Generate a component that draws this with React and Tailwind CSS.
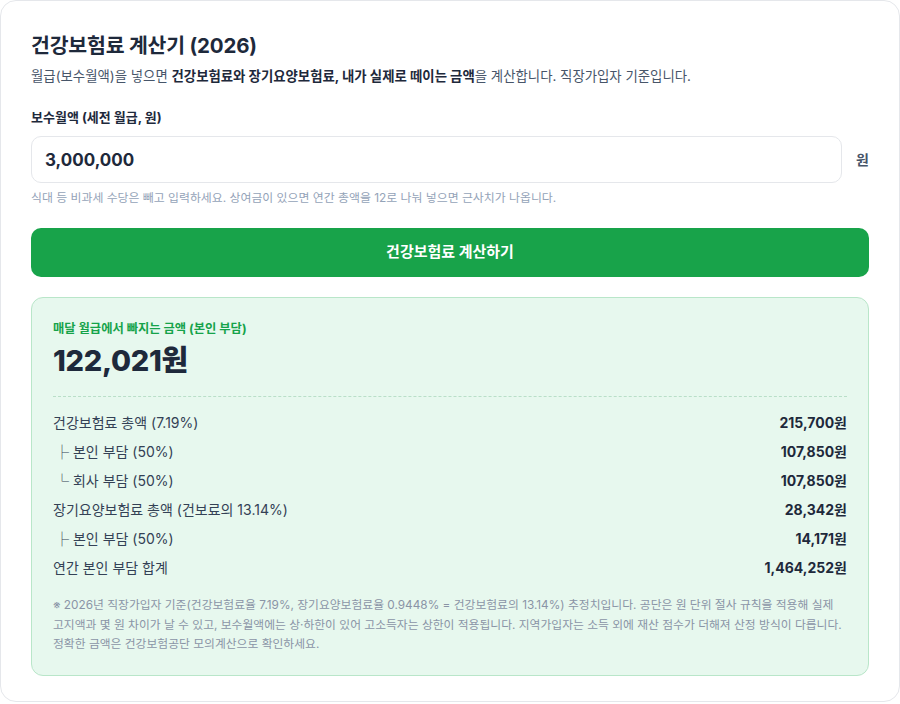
import { useState } from 'react';

const rows = [
  { label: '건강보험료 총액 (7.19%)', value: '215,700원' },
  { label: '├ 본인 부담 (50%)', value: '107,850원', sub: true },
  { label: '└ 회사 부담 (50%)', value: '107,850원', sub: true },
  { label: '장기요양보험료 총액 (건보료의 13.14%)', value: '28,342원' },
  { label: '├ 본인 부담 (50%)', value: '14,171원', sub: true },
  { label: '연간 본인 부담 합계', value: '1,464,252원' },
];

export default function App() {
  const [salary, setSalary] = useState('3,000,000');

  return (
    <div
      className="w-[900px] h-[704px] bg-white"
      style={{ fontFamily: 'Inter, "Noto Sans CJK KR", sans-serif' }}
    >
      <div className="h-[702px] rounded-2xl border border-gray-200 bg-white px-[30px] pt-[33px] text-[#1e293b]">
        <h1 className="text-[20.5px] font-bold leading-[24px] tracking-[-0.2px]">건강보험료 계산기 (2026)</h1>
        <p className="mt-[9px] text-[13.4px] leading-[18px] text-[#475569]">
          월급(보수월액)을 넣으면 <b className="font-bold text-[#1e293b]">건강보험료와 장기요양보험료, 내가 실제로 떼이는 금액</b>을 계산합니다. 직장가입자 기준입니다.
        </p>

        <label className="mt-[23px] block text-[13px] font-bold leading-[18px] text-[#1e293b]">보수월액 (세전 월급, 원)</label>
        <div className="mt-[10px] flex items-center gap-[14px]">
          <input
            value={salary}
            onChange={(e) => setSalary(e.target.value)}
            className="h-[47px] flex-1 rounded-[10px] border border-gray-200 bg-white px-[13px] text-[17px] font-bold text-[#1e293b] outline-none"
          />
          <span className="text-[14px] font-bold text-[#475569]">원</span>
        </div>
        <p className="mt-[7px] text-[11.9px] leading-[16px] text-[#94a3b8]">
          식대 등 비과세 수당은 빼고 입력하세요. 상여금이 있으면 연간 총액을 12로 나눠 넣으면 근사치가 나옵니다.
        </p>

        <button className="mt-[22px] h-[49px] w-full rounded-[10px] bg-[#18a34a] text-[15px] font-bold text-white">
          건강보험료 계산하기
        </button>

        <div className="mt-[20px] rounded-[12px] border border-[#b9e6c9] bg-[#e7f8ee] px-[21px] pb-[20px] pt-[23px]">
          <div className="text-[12.3px] font-bold leading-[16px] text-[#16a34a]">매달 월급에서 빠지는 금액 (본인 부담)</div>
          <div className="mt-[6px] text-[29px] font-extrabold leading-[36px] tracking-[-0.3px] text-[#1e293b]">122,021원</div>
          <div className="mt-[17px] border-t border-dashed border-[#b9dfc8]" />
          <div className="mt-[11px] flex flex-col">
            {rows.map((r, i) => (
              <div key={i} className="flex h-[29px] items-center justify-between text-[14px]">
                <span className={r.sub ? 'pl-[2px] text-[#334155]' : 'text-[#334155]'}>{r.label}</span>
                <span className="font-bold text-[#1e293b]">{r.value}</span>
              </div>
            ))}
          </div>
          <p className="mt-[14px] text-[11.8px] leading-[19.5px] text-[#8a94a6]">
            ※ 2026년 직장가입자 기준(건강보험료율 7.19%, 장기요양보험료율 0.9448% = 건강보험료의 13.14%) 추정치입니다. 공단은 원 단위 절사 규칙을 적용해 실제 고지액과 몇 원 차이가 날 수 있고, 보수월액에는 상·하한이 있어 고소득자는 상한이 적용됩니다. 지역가입자는 소득 외에 재산 점수가 더해져 산정 방식이 다릅니다. 정확한 금액은 건강보험공단 모의계산으로 확인하세요.
          </p>
        </div>
      </div>
    </div>
  );
}
